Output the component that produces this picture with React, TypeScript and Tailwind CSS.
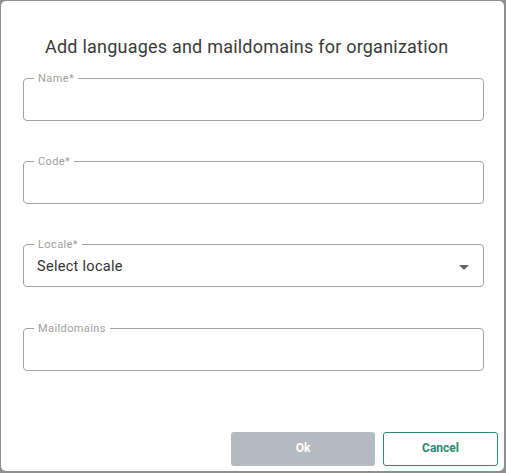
import React from "react";

const font = { fontFamily: "Roboto, 'Liberation Sans', sans-serif" };

function Field({ label, children }: { label: string; children?: React.ReactNode }) {
  return (
    <fieldset className="m-0 h-[49px] rounded-[4px] border border-[#a3a3a3] pl-[10px] pr-[14px]">
      <legend className="px-[4px] text-[11px] leading-[13px] tracking-[0.4px] text-[#9e9e9e]">{label}</legend>
      {children}
    </fieldset>
  );
}

export default function App() {
  return (
    <div className="h-[473px] w-[506px] bg-[#8f8f8f] pl-[1px] pt-[1px]" style={font}>
      <div className="flex h-[470px] w-[503px] flex-col rounded-[5px] bg-white">
        <h2 className="pl-[44px] pt-[34px] text-[18px] leading-[24px] tracking-[0.22px] text-[#3a3a3a]">
          Add languages and maildomains for organization
        </h2>
        <div className="mt-[13px] flex flex-col gap-[34px] pl-[22px] pr-[20px]">
          <Field label="Name*" />
          <Field label="Code*" />
          <Field label="Locale*">
            <div className="flex h-[35px] items-center justify-between pb-[3px] pl-[3px]">
              <span className="text-[14.5px] tracking-[0.3px] text-[#333]">Select locale</span>
              <svg width="10" height="5" viewBox="0 0 10 5">
                <path d="M0 0h10L5 5z" fill="#666" />
              </svg>
            </div>
          </Field>
          <div className="pt-[1px]">
            <Field label="Maildomains" />
          </div>
        </div>
        <div className="mt-auto flex justify-end gap-[8px] pb-[5px] pr-[6px]">
          <button className="h-[34px] w-[144px] rounded-[3px] bg-[#b4bac2] pb-[2px] text-[12px] font-bold text-white">
            Ok
          </button>
          <button className="h-[34px] w-[115px] rounded-[3px] border border-[#2b8a74] bg-white pb-[2px] text-[12px] font-bold text-[#2b8a74]">
            Cancel
          </button>
        </div>
      </div>
    </div>
  );
}
